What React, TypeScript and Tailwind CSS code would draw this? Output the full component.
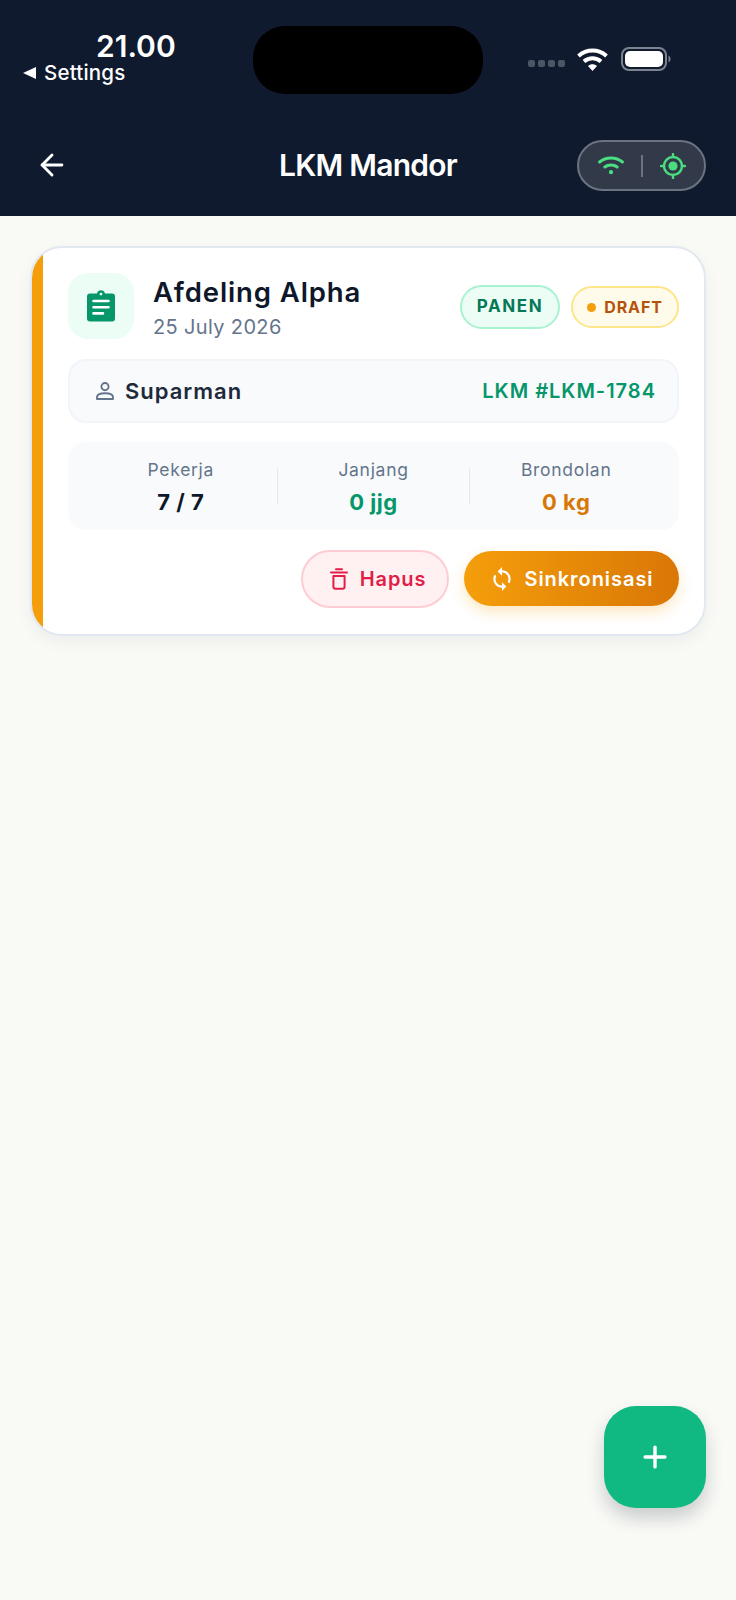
import { ArrowLeft, Plus } from "lucide-react";
import { MdSync } from "react-icons/md";

function StatusWifi() {
  return (
    <svg width="31" height="24" viewBox="0 0 31 24" fill="none" stroke="white" strokeWidth="4" strokeLinecap="butt">
      <path d="M1.5 9C9.5 1.8 21.5 1.8 29.5 9" />
      <path d="M7 14.5C12 10.2 19 10.2 24 14.5" />
      <path d="M15.5 24L11 19C13.5 16.8 17.5 16.8 20 19Z" fill="white" stroke="none" />
    </svg>
  );
}

function Battery() {
  return (
    <svg width="50" height="24" viewBox="0 0 50 24" fill="none">
      <rect x="1" y="1" width="44" height="22" rx="7" stroke="#7b8391" strokeWidth="2" />
      <rect x="4" y="4" width="38" height="16" rx="5" fill="white" />
      <path d="M47.5 8.5C49 9.5 49.5 10.5 49.5 12C49.5 13.5 49 14.5 47.5 15.5Z" fill="#7b8391" />
    </svg>
  );
}

function PillWifi() {
  return (
    <svg width="26" height="19" viewBox="0 0 26 19" fill="none" stroke="#4ade80" strokeWidth="3" strokeLinecap="round">
      <path d="M1.6 6C8 0.6 18 0.6 24.4 6" />
      <path d="M6.8 11C10.2 8.2 15.8 8.2 19.2 11" />
      <circle cx="13" cy="16.2" r="1.4" fill="#4ade80" strokeWidth="1.4" />
    </svg>
  );
}

function PillTarget() {
  return (
    <svg width="26" height="26" viewBox="0 0 26 26" fill="none" stroke="#4ade80" strokeWidth="2.4" strokeLinecap="round">
      <circle cx="13" cy="13" r="9" />
      <circle cx="13" cy="13" r="4.6" fill="#4ade80" stroke="none" />
      <path d="M13 1V4M13 22V25M1 13H4M22 13H25" />
    </svg>
  );
}

function ClipboardIcon() {
  return (
    <svg width="30" height="32" viewBox="0 0 30 32" fill="none">
      <path
        fill="#059669"
        fillRule="evenodd"
        d="M4 3.5H11C11.6 1.4 13 0.3 15 0.3C17 0.3 18.4 1.4 19 3.5H26C28 3.5 29 4.5 29 6.5V28.5C29 30.5 28 31.5 26 31.5H4C2 31.5 1 30.5 1 28.5V6.5C1 4.5 2 3.5 4 3.5ZM15 2.8C14.2 2.8 13.6 3.4 13.6 4.1C13.6 4.8 14.2 5.4 15 5.4C15.8 5.4 16.4 4.8 16.4 4.1C16.4 3.4 15.8 2.8 15 2.8Z"
      />
      <path d="M7.5 11H22.5M7.5 17.3H22.5M7.5 23.4H17" stroke="white" strokeWidth="2.6" strokeLinecap="round" />
    </svg>
  );
}

function PersonIcon() {
  return (
    <svg width="20" height="20" viewBox="0 0 20 20" fill="none" stroke="#64748b" strokeWidth="1.9">
      <circle cx="10" cy="5.6" r="3.6" />
      <path d="M2 16.2C2 13.6 5.6 12.2 10 12.2C14.4 12.2 18 13.6 18 16.2V18H2Z" strokeLinejoin="round" />
    </svg>
  );
}

function TrashIcon() {
  return (
    <svg width="18" height="22" viewBox="0 0 18 22" fill="none" stroke="#e11d48" strokeWidth="2">
      <path d="M1 4.5H17" strokeLinecap="round" />
      <path d="M6 1.2H12" strokeLinecap="round" />
      <path d="M3.4 8V18.5C3.4 20 4.2 20.8 5.6 20.8H12.4C13.8 20.8 14.6 20 14.6 18.5V8Z" strokeLinejoin="round" />
    </svg>
  );
}

function Stat({ label, value, tone }: { label: string; value: string; tone: string }) {
  return (
    <div className="flex flex-1 flex-col items-center">
      <span className="text-[17.5px] leading-[22px] tracking-[0.7px] text-[#64748b]">{label}</span>
      <span className={`mt-[9px] text-[22px] leading-[24px] font-bold tracking-[0.5px] ${tone}`}>{value}</span>
    </div>
  );
}

export default function App() {
  return (
    <div className="flex min-h-[1600px] flex-col bg-[#f9faf6] font-['Inter',sans-serif]">
      <header className="bg-[#0f1a2e] pt-[26px] pb-[25px] text-white">
        <div className="flex h-[68px]">
          <div className="w-[253px] pl-[23px]">
            <div className="mt-[4px] ml-[73px] text-[30px] leading-[32px] font-semibold">21.00</div>
            <div className="mt-[-1px] flex items-center gap-[8px] text-[20.5px] leading-[24px] font-medium tracking-[0.2px]">
              <span className="h-0 w-0 border-y-[6px] border-r-[13px] border-y-transparent border-r-white" />
              <span>Settings</span>
            </div>
          </div>
          <div className="h-[68px] w-[230px] rounded-[32px] bg-black" />
          <div className="ml-[45px] flex items-center pb-[2px]">
            <div className="mt-[8px] flex gap-[3px]">
              <span className="h-[7px] w-[7px] rounded-[2px] bg-[#4b5563]" />
              <span className="h-[7px] w-[7px] rounded-[2px] bg-[#4b5563]" />
              <span className="h-[7px] w-[7px] rounded-[2px] bg-[#4b5563]" />
              <span className="h-[7px] w-[7px] rounded-[2px] bg-[#4b5563]" />
            </div>
            <div className="ml-[12px] flex items-center gap-[13px]">
              <StatusWifi />
              <Battery />
            </div>
          </div>
        </div>
        <div className="mt-[46px] grid grid-cols-[1fr_auto_1fr] items-center px-[30px]">
          <ArrowLeft className="mb-[2px] ml-[5px] h-[34px] w-[34px] text-white" strokeWidth={2} />
          <h1 className="mb-[2px] text-[30px] leading-[36px] font-semibold tracking-[-0.75px]">LKM Mandor</h1>
          <div className="flex h-[51px] w-[129px] items-center justify-center gap-[17px] justify-self-end rounded-full border-2 border-[#6b7280] bg-[#323a49]">
            <PillWifi />
            <span className="h-[22px] w-[2px] bg-[#6b7280]" />
            <PillTarget />
          </div>
        </div>
      </header>

      <main className="flex flex-1 flex-col px-[30px] pt-[30px] pb-[92px]">
        <section className="flex h-[390px] overflow-hidden rounded-[32px] border-2 border-[#e2e8f0] bg-white shadow-[0_6px_16px_rgba(15,23,42,0.05)]">
          <div className="w-[11px] bg-[#f59e0b]" />
          <div className="flex flex-1 flex-col pt-[25px] pr-[25px] pl-[25px]">
            <div className="flex h-[66px] items-center">
              <div className="flex h-[66px] w-[66px] items-center justify-center rounded-[20px] bg-[#ecfdf5]">
                <ClipboardIcon />
              </div>
              <div className="ml-[19px] flex flex-1 flex-col pt-[2px]">
                <span className="text-[27.5px] leading-[34px] font-semibold tracking-[0.9px] text-[#0f172a]">Afdeling Alpha</span>
                <span className="mt-[5px] text-[20px] leading-[26px] tracking-[0.35px] text-[#64748b]">25 July 2026</span>
              </div>
              <div className="mt-[2px] flex items-center gap-[11px]">
                <span className="flex h-[44px] w-[100px] items-center justify-center rounded-full border-2 border-[#a7f3d0] bg-[#ecfdf5] text-[17px] font-bold tracking-[1.6px] text-[#047857]">PANEN</span>
                <span className="flex h-[42px] w-[108px] items-center justify-center gap-[8px] rounded-full border-2 border-[#fde68a] bg-[#fffbeb] text-[16px] font-bold tracking-[0.9px] text-[#b45309]">
                  <span className="h-[9px] w-[9px] rounded-full bg-[#f59e0b]" />
                  DRAFT
                </span>
              </div>
            </div>

            <div className="mt-[20px] flex h-[64px] items-center rounded-[18px] border-2 border-[#f1f5f9] bg-[#f8fafc] pr-[21px] pl-[25px]">
              <PersonIcon />
              <span className="ml-[10px] flex-1 text-[22px] font-semibold tracking-[1px] text-[#1e293b]">Suparman</span>
              <span className="text-[20px] font-semibold tracking-[1px] text-[#059669]">LKM #LKM-1784</span>
            </div>

            <div className="mt-[19px] flex h-[88px] items-center rounded-[18px] bg-[#f8fafc] px-[17px]">
              <Stat label="Pekerja" value="7 / 7" tone="text-[#0f172a]" />
              <span className="h-[36px] w-[1px] bg-[#e2e8f0]" />
              <Stat label="Janjang" value="0 jjg" tone="text-[#059669]" />
              <span className="h-[36px] w-[1px] bg-[#e2e8f0]" />
              <Stat label="Brondolan" value="0 kg" tone="text-[#d97706]" />
            </div>

            <div className="mt-[20px] flex items-center justify-end gap-[15px]">
              <button className="flex h-[58px] w-[148px] items-center justify-center gap-[12px] rounded-full border-2 border-[#fecdd3] bg-[#fff1f2] pl-[6px] text-[20px] font-semibold tracking-[0.9px] text-[#e11d48]">
                <TrashIcon />
                Hapus
              </button>
              <button className="mb-[1px] flex h-[55px] w-[215px] items-center justify-center gap-[9px] rounded-full bg-gradient-to-r from-[#f59e0b] to-[#d97706] text-[20px] font-semibold tracking-[0.95px] text-white shadow-[0_6px_14px_rgba(245,158,11,0.25)]">
                <MdSync className="h-[26px] w-[26px]" />
                Sinkronisasi
              </button>
            </div>
          </div>
        </section>

        <button className="mt-auto flex h-[102px] w-[102px] items-center justify-center self-end rounded-[32px] bg-[#10b981] text-white shadow-[0_10px_18px_rgba(15,23,42,0.2)]">
          <Plus className="h-[34px] w-[34px]" strokeWidth={2.4} />
        </button>
      </main>
    </div>
  );
}
